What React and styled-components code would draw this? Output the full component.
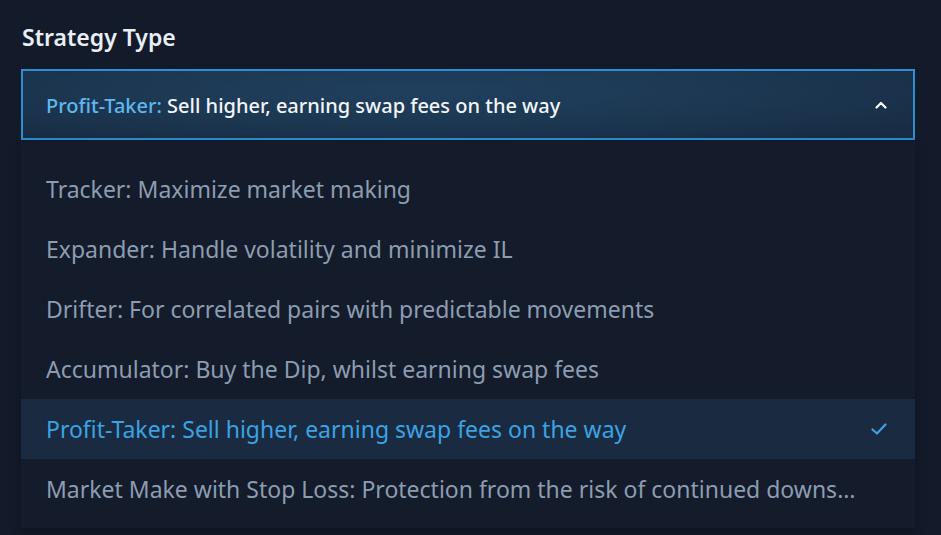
import React from 'react'
import styled, { createGlobalStyle } from 'styled-components'

const GlobalStyle = createGlobalStyle`
  html, body {
    margin: 0;
    padding: 0;
    background: #131a29;
  }
  body {
    font-family: "Noto Sans", Lato, sans-serif;
  }
`

const Page = styled.div`
  width: 941px;
  height: 535px;
  box-sizing: border-box;
  padding: 22px 26px 0 21px;
  overflow: hidden;
`

const Title = styled.div`
  font-size: 23px;
  font-weight: 600;
  color: #e8eef5;
  line-height: 30px;
  padding-left: 1px;
`

const Trigger = styled.div`
  margin-top: 17px;
  height: 71px;
  box-sizing: border-box;
  border: 2px solid #2b8fd1;
  background: radial-gradient(ellipse 70% 90% at 45% 30%, #20405e 0%, #1c3650 60%, #182c44 100%);
  display: flex;
  align-items: center;
  justify-content: space-between;
  padding: 0 26px 0 23px;
`

const TriggerText = styled.div`
  font-size: 20px;
  font-weight: 500;
  color: #f2f5f9;
  padding-top: 1px;
`

const TriggerLabel = styled.span`
  color: #5cb8ef;
`

const Panel = styled.div`
  margin-top: 1px;
  background: #141b2a;
  padding: 18px 0 9px;
  box-shadow: 0 4px 10px rgba(0, 0, 0, 0.25);
`

const Option = styled.div`
  height: 60px;
  display: flex;
  align-items: center;
  justify-content: space-between;
  padding: 0 28px 0 25px;
  background: ${p => (p.selected ? '#1a2a40' : 'transparent')};
  color: ${p => (p.selected ? '#3ba3e3' : '#8c9db1')};
  font-size: 23px;
`

const OptionText = styled.span`
  white-space: nowrap;
  overflow: hidden;
  text-overflow: ellipsis;
  max-width: 812px;
`

const Chevron = () => (
  <svg width="12" height="8" viewBox="0 0 12 8" fill="none">
    <path d="M1.5 6.5L6 2l4.5 4.5" stroke="#ffffff" strokeWidth="2.2" strokeLinecap="round" strokeLinejoin="round" />
  </svg>
)

const Check = () => (
  <svg width="16" height="12" viewBox="0 0 16 12" fill="none">
    <path d="M1.5 6.5l4.5 4 8.5-9" stroke="#3ba3e3" strokeWidth="2.2" strokeLinecap="round" strokeLinejoin="round" />
  </svg>
)

const options = [
  'Tracker: Maximize market making',
  'Expander: Handle volatility and minimize IL',
  'Drifter: For correlated pairs with predictable movements',
  'Accumulator: Buy the Dip, whilst earning swap fees',
  'Profit-Taker: Sell higher, earning swap fees on the way',
  'Market Make with Stop Loss: Protection from the risk of continued downside',
]

const App = () => {
  const selected = 4
  return (
    <>
      <GlobalStyle />
      <Page>
        <Title>Strategy Type</Title>
        <Trigger>
          <TriggerText>
            <TriggerLabel>Profit-Taker:</TriggerLabel> Sell higher, earning swap fees on the way
          </TriggerText>
          <Chevron />
        </Trigger>
        <Panel>
          {options.map((o, i) => (
            <Option key={o} selected={i === selected}>
              <OptionText>{o}</OptionText>
              {i === selected && <Check />}
            </Option>
          ))}
        </Panel>
      </Page>
    </>
  )
}

export default App
